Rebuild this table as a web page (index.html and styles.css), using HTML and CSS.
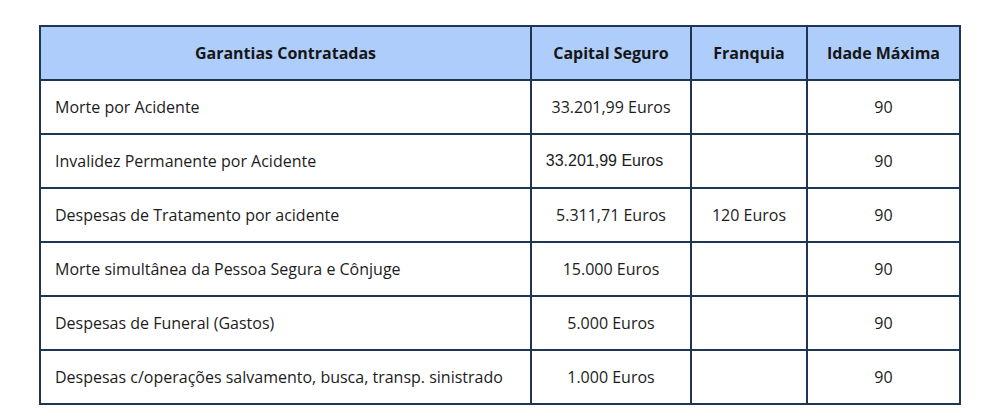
FILE: index.html
```html
<!DOCTYPE html>
<html lang="pt">
<head>
<meta charset="utf-8">
<title>Garantias</title>
<link rel="stylesheet" href="styles.css">
</head>
<body>
<div class="wrap">
<table class="cov">
  <colgroup>
    <col class="c1"><col class="c2"><col class="c3"><col class="c4">
  </colgroup>
  <thead>
    <tr><th>Garantias Contratadas</th><th>Capital Seguro</th><th>Franquia</th><th>Idade Máxima</th></tr>
  </thead>
  <tbody>
    <tr><td class="name">Morte por Acidente</td><td>33.201,99 Euros</td><td></td><td>90</td></tr>
    <tr><td class="name">Invalidez Permanente por Acidente</td><td><span class="arial">33.201,99 Euros</span></td><td></td><td>90</td></tr>
    <tr><td class="name">Despesas de Tratamento por acidente</td><td>5.311,71 Euros</td><td>120 Euros</td><td>90</td></tr>
    <tr><td class="name">Morte simultânea da Pessoa Segura e Cônjuge</td><td>15.000 Euros</td><td></td><td>90</td></tr>
    <tr><td class="name">Despesas de Funeral (Gastos)</td><td>5.000 Euros</td><td></td><td>90</td></tr>
    <tr><td class="name">Despesas c/operações salvamento, busca, transp. sinistrado</td><td>1.000 Euros</td><td></td><td>90</td></tr>
  </tbody>
</table>
</div>
</body>
</html>
```

FILE: styles.css
```css
html, body {
  margin: 0;
  padding: 0;
  background: #ffffff;
}
.wrap {
  padding: 25px 0 0 39px;
}
.cov {
  border-collapse: collapse;
  table-layout: fixed;
  width: 920px;
  font-family: "Open Sans", "Liberation Sans", sans-serif;
  font-size: 16px;
  color: #1c1c1c;
}
.c1 { width: 491px; }
.c2 { width: 160px; }
.c3 { width: 116px; }
.c4 { width: 153px; }
.cov th, .cov td {
  border: 2px solid #1e3654;
  text-align: center;
  vertical-align: middle;
  padding: 0 4px;
  line-height: 22px;
}
.cov th {
  background: #afcdfb;
  font-weight: 700;
  height: 52px;
  color: #161616;
}
.cov td {
  height: 52px;
}
.cov td.name {
  text-align: left;
  padding-left: 14px;
}
.arial {
  font-family: "Liberation Sans", Arial, sans-serif;
  display: inline-block;
  padding-right: 13px;
  position: relative;
  top: -1px;
}
```
